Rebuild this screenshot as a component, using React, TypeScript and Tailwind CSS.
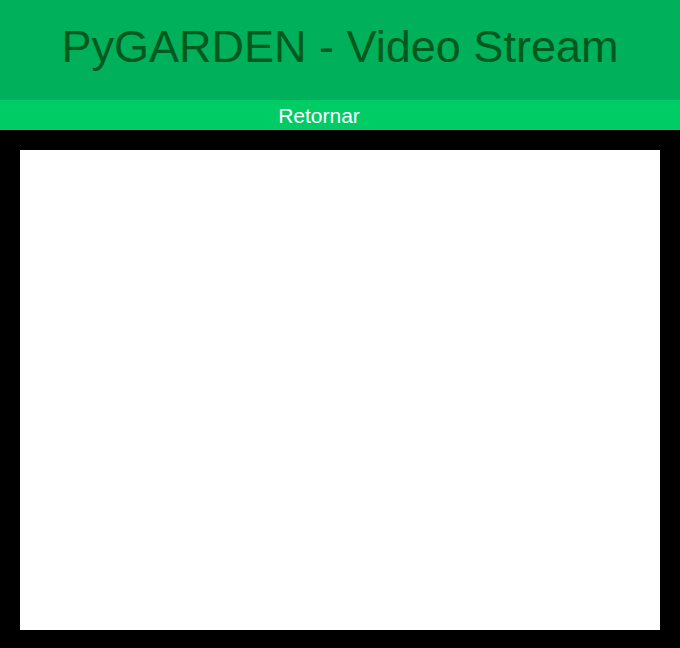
import React from 'react';

export default function App() {
  return (
    <div className="min-h-screen bg-black font-['Liberation_Sans',Arial,sans-serif]">
      {/* HEADER */}
      <header className="h-[100px] bg-[#00b05a] flex items-center justify-center pb-[7px]">
        <h1 className="text-[45px] leading-none text-[#005a1e]">PyGARDEN - Video Stream</h1>
      </header>

      {/* NAV */}
      <nav className="h-[30px] bg-[#00cc66] flex items-center justify-center pr-[42px]">
        <a href="#" className="text-[21px] leading-none text-white">Retornar</a>
      </nav>

      {/* STREAM */}
      <main className="p-5 pb-[18px]">
        <div className="w-[640px] h-[480px] bg-white"></div>
      </main>
    </div>
  );
}
